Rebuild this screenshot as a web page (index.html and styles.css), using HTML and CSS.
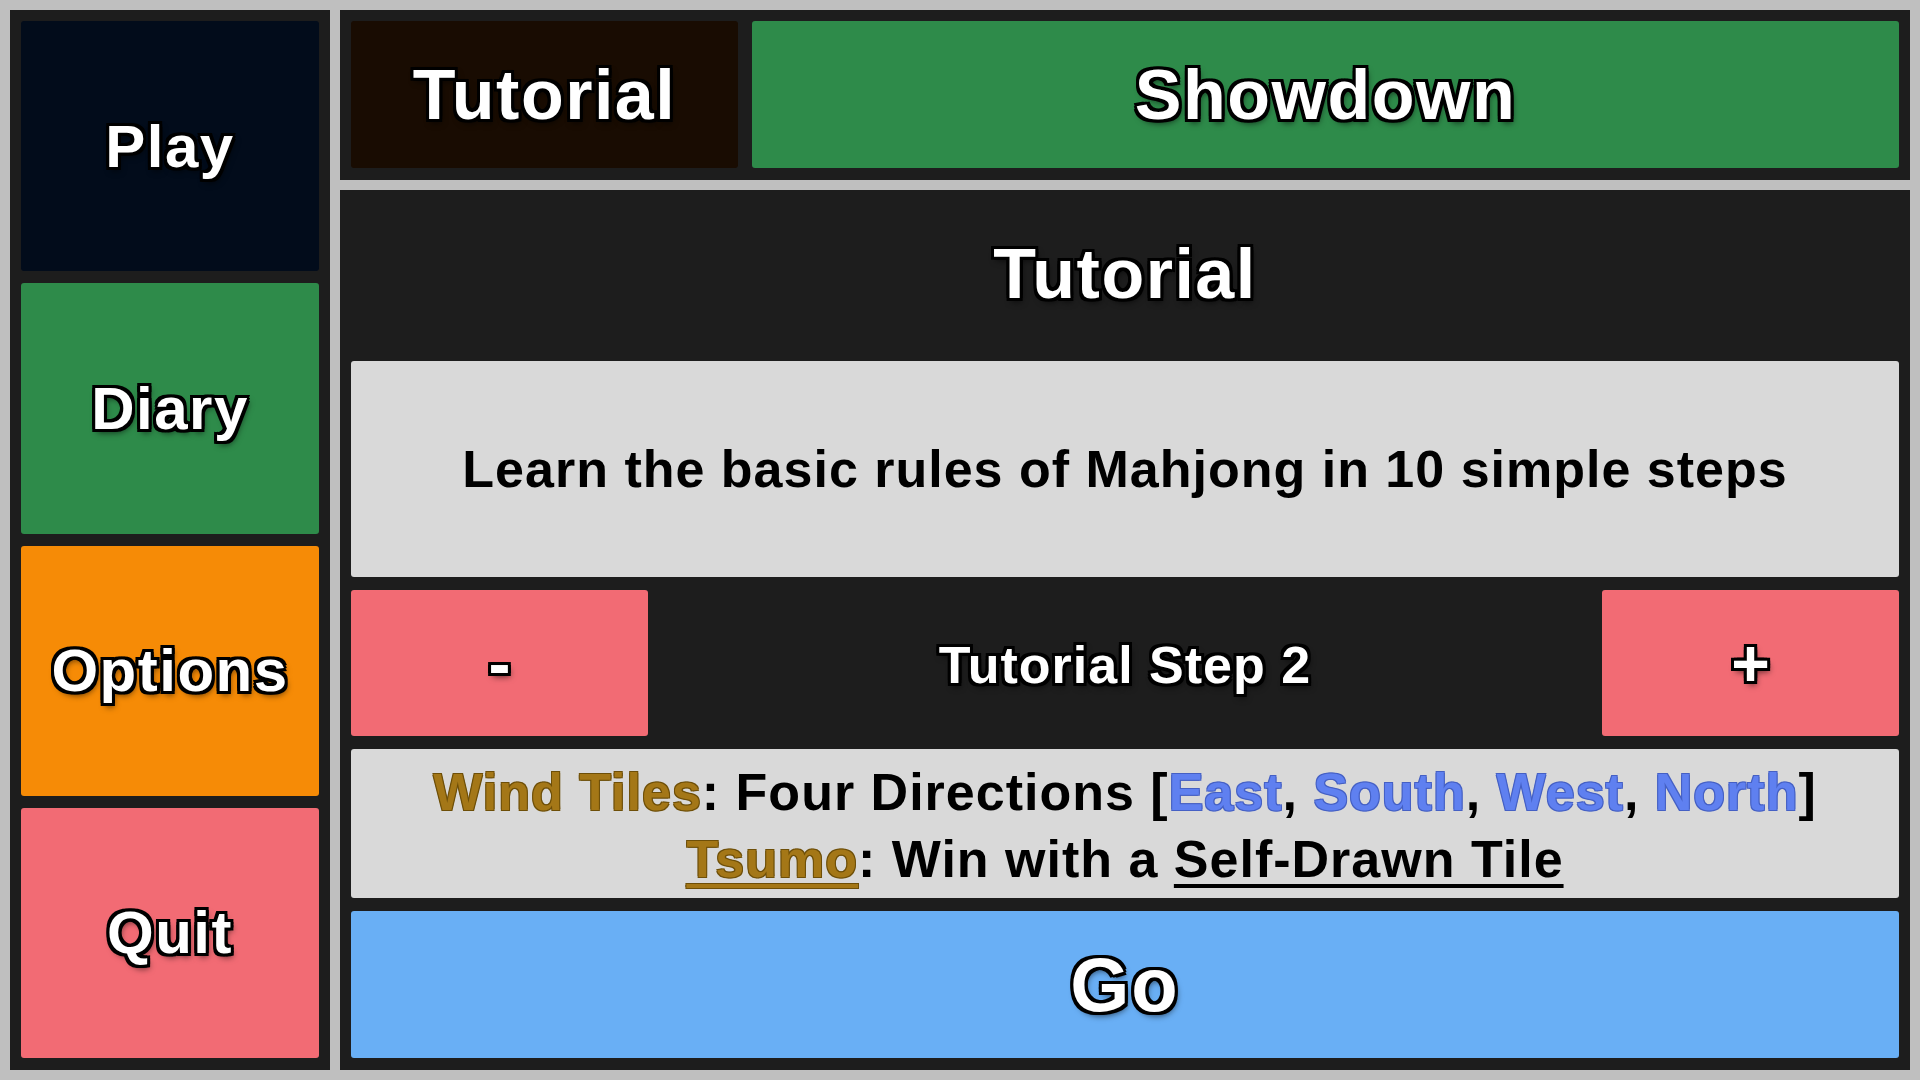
FILE: index.html
```html
<!DOCTYPE html>
<html lang="en">
<head>
<meta charset="utf-8">
<title>Mahjong Tutorial</title>
<link rel="stylesheet" href="styles.css">
</head>
<body>
<div class="app">
  <nav class="sidebar">
    <div class="side-btn play outline">Play</div>
    <div class="side-btn diary outline">Diary</div>
    <div class="side-btn options outline">Options</div>
    <div class="side-btn quit outline">Quit</div>
  </nav>
  <main class="main">
    <div class="tabs">
      <div class="tab tab-tutorial outline">Tutorial</div>
      <div class="tab tab-showdown outline">Showdown</div>
    </div>
    <section class="panel">
      <div class="row title outline">Tutorial</div>
      <div class="row desc">Learn the basic rules of Mahjong in 10 simple steps</div>
      <div class="row step">
        <div class="step-btn outline">-</div>
        <div class="step-label outline">Tutorial Step 2</div>
        <div class="step-btn outline">+</div>
      </div>
      <div class="row info">
        <div class="info-line"><span class="gold">Wind Tiles</span>: Four Directions [<span class="blue">East</span>, <span class="blue">South</span>, <span class="blue">West</span>, <span class="blue">North</span>]</div>
        <div class="info-line"><span class="gold ul">Tsumo</span>: Win with a <span class="ul">Self-Drawn Tile</span></div>
      </div>
      <div class="row go outline">Go</div>
    </section>
  </main>
</div>
</body>
</html>
```

FILE: styles.css
```css
* { box-sizing: border-box; }

html, body {
  margin: 0;
  padding: 0;
  width: 1920px;
  height: 1080px;
  overflow: hidden;
  background: #bfbfbf;
  font-family: "Liberation Sans", Arial, sans-serif;
  font-weight: 700;
}

.app {
  display: flex;
  gap: 10px;
  padding: 10px;
  height: 1080px;
}

.outline {
  color: #fff;
  text-shadow:
    -3px -3px 0 #000, 3px -3px 0 #000, -3px 3px 0 #000, 3px 3px 0 #000,
    0 -3px 0 #000, 0 3px 0 #000, -3px 0 0 #000, 3px 0 0 #000,
    2px 4px 6px rgba(0,0,0,0.6);
}

.sidebar {
  width: 320px;
  flex: none;
  background: #1d1d1d;
  padding: 11px 11px 12px;
  display: flex;
  flex-direction: column;
  gap: 12px;
}

.side-btn {
  flex: 1;
  border-radius: 3px;
  display: flex;
  align-items: center;
  justify-content: center;
  font-size: 60px;
  letter-spacing: 1.5px;
}

.play { background: #020c1b; }
.diary { background: #2e8b4a; }
.options { background: #f68b06; }
.quit { background: #f26b74; }

.main {
  flex: 1;
  display: flex;
  flex-direction: column;
  gap: 10px;
  min-width: 0;
}

.tabs {
  height: 170px;
  flex: none;
  background: #1d1d1d;
  padding: 11px 11px 12px;
  display: flex;
  gap: 14px;
}

.tab {
  border-radius: 3px;
  display: flex;
  align-items: center;
  justify-content: center;
  font-size: 70px;
  letter-spacing: 1.5px;
}

.tab-tutorial {
  width: 387px;
  flex: none;
  background: #190c02;
}

.tab-showdown {
  flex: 1;
  background: #2e8b4a;
}

.panel {
  flex: 1;
  background: #1d1d1d;
  padding: 11px 11px 12px;
  display: flex;
  flex-direction: column;
  gap: 13px;
}

.row {
  border-radius: 3px;
  display: flex;
  align-items: center;
  justify-content: center;
  min-height: 0;
}

.title {
  flex: 147 1 0;
  font-size: 70px;
  letter-spacing: 1.5px;
}

.desc {
  flex: 217 1 0;
  background: #d9d9d9;
  color: #000;
  font-size: 52px;
  letter-spacing: 1px;
}

.step {
  flex: 146 1 0;
  justify-content: space-between;
  align-items: stretch;
  text-shadow: none;
}

.step-btn {
  width: 297px;
  flex: none;
  background: #f26b74;
  border-radius: 3px;
  display: flex;
  align-items: center;
  justify-content: center;
  font-size: 66px;
}

.step-label {
  flex: 1;
  display: flex;
  align-items: center;
  justify-content: center;
  padding-top: 5px;
  font-size: 52px;
  letter-spacing: 1px;
}

.info {
  flex: 146 1 0;
  background: #d9d9d9;
  color: #000;
  flex-direction: column;
  font-size: 52px;
  letter-spacing: 1px;
  line-height: 67px;
  padding-top: 4px;
}

.info-line { white-space: nowrap; }

.gold {
  color: #a47717;
  text-shadow:
    -1px -1px 0 #6e4f08, 1px -1px 0 #6e4f08, -1px 1px 0 #6e4f08, 1px 1px 0 #6e4f08;
}

.blue {
  color: #5f80f0;
  text-shadow:
    -1px -1px 0 #4560c4, 1px -1px 0 #4560c4, -1px 1px 0 #4560c4, 1px 1px 0 #4560c4;
}

.ul {
  text-decoration: underline;
  text-decoration-thickness: 4px;
  text-underline-offset: 7px;
}

.go {
  flex: 147 1 0;
  background: #69aff5;
  font-size: 76px;
  letter-spacing: 2px;
}
```
